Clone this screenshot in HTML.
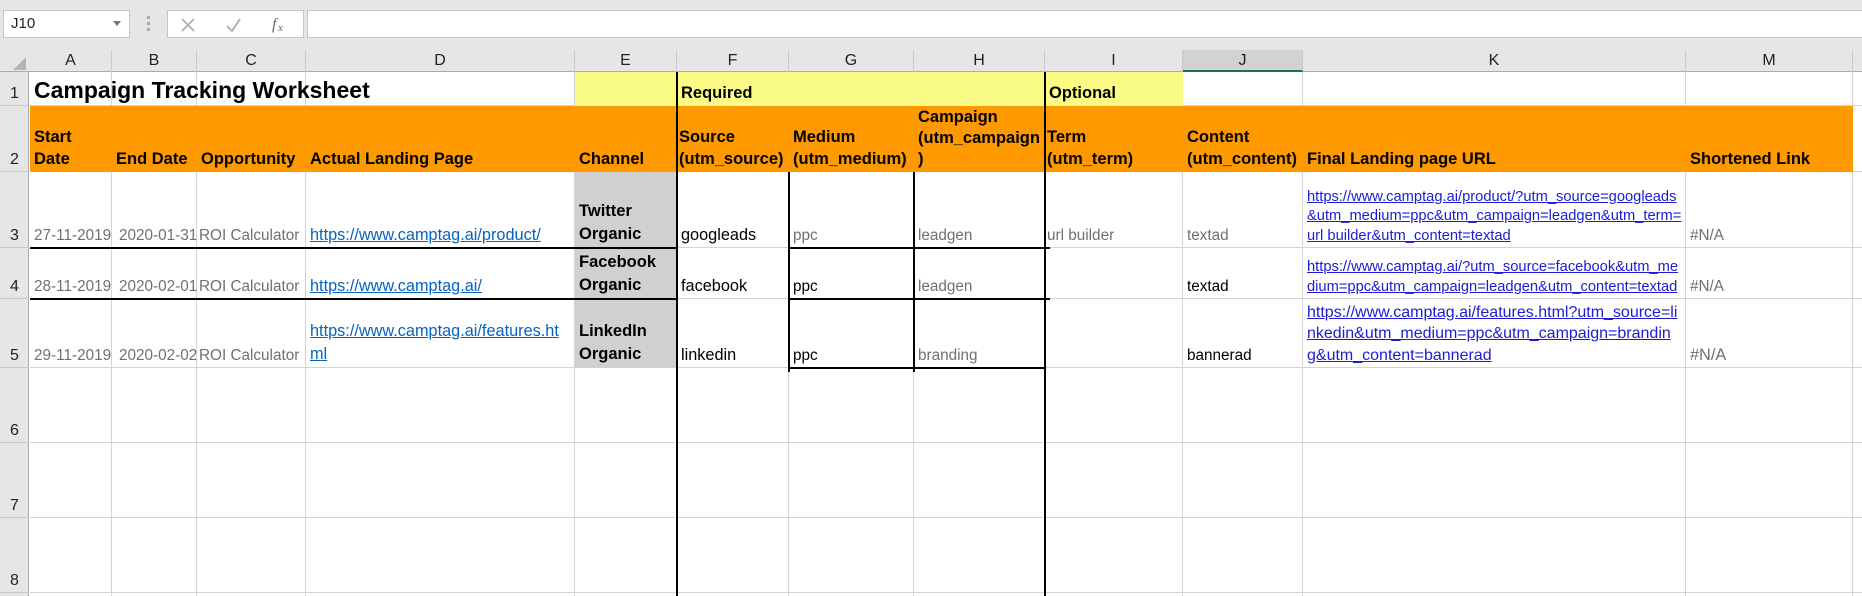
<!DOCTYPE html>
<html><head><meta charset="utf-8">
<style>
*{box-sizing:border-box;margin:0;padding:0}
body{width:1862px;height:596px;overflow:hidden;background:#fff;font-family:"Liberation Sans",Arial,sans-serif;position:relative}
.a{position:absolute}
.c{position:absolute;display:flex;align-items:flex-end;padding:0 0 2px 4px;white-space:nowrap;overflow:visible;font-size:16.3px;line-height:21px}
.b{font-weight:bold;color:#000;font-size:16.5px}
.g{color:#707070;font-size:15.3px}
.k{color:#000}
.lnk{color:#0563c1;text-decoration:underline;font-size:16.3px}
.lnk2{color:#1c1cd6;text-decoration:underline;font-size:14.7px;line-height:19.5px}
.hl{position:absolute;height:1px;background:#d4d4d4}
.vl{position:absolute;width:1px;background:#d4d4d4}
.bh{position:absolute;height:2px;background:#000}
.bv{position:absolute;width:2px;background:#000}
.ch{position:absolute;top:50px;height:22px;text-align:center;font-size:16px;color:#222;line-height:22px;border-right:1px solid #c8c8c8}
.rh{position:absolute;left:0;width:29px;text-align:center;font-size:16px;color:#222;display:flex;align-items:flex-end;justify-content:center;padding-bottom:2px;border-bottom:1px solid #c8c8c8}
</style></head><body>
<div class="a" style="left:0;top:0;width:1862px;height:50px;background:#e6e6e6"></div>
<div class="a" style="left:3px;top:10px;width:127px;height:28px;background:#fff;border:1px solid #c6c6c6;font-size:15px;line-height:26px;padding-left:7px;color:#222">J10</div>
<div class="a" style="left:113px;top:21px;width:0;height:0;border-left:4px solid transparent;border-right:4px solid transparent;border-top:5px solid #777"></div>
<div class="a" style="left:147px;top:16px;width:3px;height:3px;background:#aaa"></div>
<div class="a" style="left:147px;top:22px;width:3px;height:3px;background:#aaa"></div>
<div class="a" style="left:147px;top:28px;width:3px;height:3px;background:#aaa"></div>
<div class="a" style="left:167px;top:10px;width:137px;height:28px;background:#fff;border:1px solid #c6c6c6"></div>
<svg class="a" style="left:180px;top:16px" width="130" height="18">
<path d="M2 3 L14 15 M14 3 L2 15" stroke="#aaa" stroke-width="1.6" fill="none"/>
<path d="M47 10 L52 15 L60 3" stroke="#aaa" stroke-width="1.8" fill="none"/>
<text x="92" y="13" font-family="Liberation Serif,serif" font-style="italic" font-size="16" fill="#666">f</text>
<text x="98" y="15" font-family="Liberation Serif,serif" font-style="italic" font-size="11" fill="#666">x</text>
</svg>
<div class="a" style="left:307px;top:10px;width:1560px;height:28px;background:#fff;border:1px solid #c6c6c6"></div>
<div class="a" style="left:0;top:50px;width:1862px;height:22px;background:#e6e6e6;border-bottom:1px solid #ababab"></div>
<div class="a" style="left:0;top:72px;width:29px;height:524px;background:#e6e6e6;border-right:1px solid #ababab"></div>
<svg class="a" style="left:12px;top:56px" width="16" height="15"><polygon points="14,1 14,14 1,14" fill="#b4b4b4"/></svg>
<div class="ch" style="left:30px;width:82px">A</div>
<div class="ch" style="left:112px;width:85px">B</div>
<div class="ch" style="left:197px;width:109px">C</div>
<div class="ch" style="left:306px;width:269px">D</div>
<div class="ch" style="left:575px;width:102px">E</div>
<div class="ch" style="left:677px;width:112px">F</div>
<div class="ch" style="left:789px;width:125px">G</div>
<div class="ch" style="left:914px;width:131px">H</div>
<div class="ch" style="left:1045px;width:138px">I</div>
<div class="ch" style="left:1183px;width:120px;background:#d2d2d2;border-bottom:2px solid #217346">J</div>
<div class="ch" style="left:1303px;width:383px">K</div>
<div class="ch" style="left:1686px;width:167px">M</div>
<div class="rh" style="top:72px;height:34px">1</div>
<div class="rh" style="top:106px;height:66px">2</div>
<div class="rh" style="top:172px;height:76px">3</div>
<div class="rh" style="top:248px;height:51px">4</div>
<div class="rh" style="top:299px;height:69px">5</div>
<div class="rh" style="top:368px;height:75px">6</div>
<div class="rh" style="top:443px;height:75px">7</div>
<div class="rh" style="top:518px;height:75px">8</div>
<div id="grid"></div>
<div class="a" style="left:575px;top:72px;width:608px;height:34px;background:#fbfc85"></div>
<div class="a" style="left:30px;top:106px;width:1823px;height:66px;background:#ff9900"></div>
<div class="a" style="left:575px;top:172px;width:102px;height:196px;background:#d0d0d0"></div>
<div class="bv" style="left:676px;top:72px;height:524px"></div>
<div class="bv" style="left:1044px;top:72px;height:524px"></div>
<div class="bv" style="left:788px;top:172px;height:200px"></div>
<div class="bv" style="left:913px;top:172px;height:200px"></div>
<div class="bh" style="left:30px;top:247px;width:647px"></div>
<div class="bh" style="left:30px;top:298px;width:647px"></div>
<div class="bh" style="left:788px;top:247px;width:257px"></div>
<div class="bh" style="left:788px;top:298px;width:257px"></div>
<div class="bh" style="left:788px;top:367px;width:257px"></div>
<div class="bh" style="left:1044px;top:247px;width:6px"></div>
<div class="bh" style="left:1044px;top:298px;width:6px"></div>
<div class="c b" style="left:30px;top:72px;height:34px;font-size:23px;line-height:26px;padding-bottom:3px">Campaign Tracking Worksheet</div>
<div class="c b" style="left:677px;top:72px;height:34px">Required</div>
<div class="c b" style="left:1045px;top:72px;height:34px">Optional</div>
<div class="c b" style="left:30px;top:106px;height:66px;line-height:22px">Start<br>Date</div>
<div class="c b" style="left:112px;top:106px;height:66px">End Date</div>
<div class="c b" style="left:197px;top:106px;height:66px">Opportunity</div>
<div class="c b" style="left:306px;top:106px;height:66px">Actual Landing Page</div>
<div class="c b" style="left:575px;top:106px;height:66px">Channel</div>
<div class="c b" style="left:677px;top:106px;height:66px;padding-left:2px;line-height:22px">Source<br>(utm_source)</div>
<div class="c b" style="left:789px;top:106px;height:66px;line-height:22px">Medium<br>(utm_medium)</div>
<div class="c b" style="left:914px;top:106px;height:66px;line-height:21px">Campaign<br>(utm_campaign<br>)</div>
<div class="c b" style="left:1045px;top:106px;height:66px;padding-left:2px;line-height:22px">Term<br>(utm_term)</div>
<div class="c b" style="left:1183px;top:106px;height:66px;line-height:22px">Content<br>(utm_content)</div>
<div class="c b" style="left:1303px;top:106px;height:66px">Final Landing page URL</div>
<div class="c b" style="left:1686px;top:106px;height:66px">Shortened Link</div>
<div class="c g" style="left:30px;top:172px;height:76px">27-11-2019</div>
<div class="c g" style="left:112px;top:172px;height:76px;padding-left:7px">2020-01-31</div>
<div class="c g" style="left:197px;top:172px;height:76px;padding-left:2px">ROI Calculator</div>
<div class="c" style="left:306px;top:172px;height:76px;padding-left:4px"><span class="lnk">https://www.camptag.ai/product/</span></div>
<div class="c b" style="left:575px;top:172px;height:76px;line-height:23px">Twitter<br>Organic</div>
<div class="c k" style="left:677px;top:172px;height:76px">googleads</div>
<div class="c g" style="left:789px;top:172px;height:76px">ppc</div>
<div class="c g" style="left:914px;top:172px;height:76px">leadgen</div>
<div class="c g" style="left:1045px;top:172px;height:76px;padding-left:2px">url builder</div>
<div class="c g" style="left:1183px;top:172px;height:76px">textad</div>
<div class="c" style="left:1303px;top:172px;height:76px"><span class="lnk2">https://www.camptag.ai/product/?utm_source=googleads<br>&amp;utm_medium=ppc&amp;utm_campaign=leadgen&amp;utm_term=<br>url builder&amp;utm_content=textad</span></div>
<div class="c g" style="left:1686px;top:172px;height:76px">#N/A</div>
<div class="c g" style="left:30px;top:248px;height:51px">28-11-2019</div>
<div class="c g" style="left:112px;top:248px;height:51px;padding-left:7px">2020-02-01</div>
<div class="c g" style="left:197px;top:248px;height:51px;padding-left:2px">ROI Calculator</div>
<div class="c" style="left:306px;top:248px;height:51px"><span class="lnk">https://www.camptag.ai/</span></div>
<div class="c b" style="left:575px;top:248px;height:51px;line-height:23px">Facebook<br>Organic</div>
<div class="c k" style="left:677px;top:248px;height:51px">facebook</div>
<div class="c k" style="left:789px;top:248px;height:51px;font-size:15.3px">ppc</div>
<div class="c g" style="left:914px;top:248px;height:51px">leadgen</div>
<div class="c k" style="left:1183px;top:248px;height:51px;font-size:15.3px">textad</div>
<div class="c" style="left:1303px;top:248px;height:51px"><span class="lnk2">https://www.camptag.ai/?utm_source=facebook&amp;utm_me<br>dium=ppc&amp;utm_campaign=leadgen&amp;utm_content=textad</span></div>
<div class="c g" style="left:1686px;top:248px;height:51px">#N/A</div>
<div class="c g" style="left:30px;top:299px;height:69px">29-11-2019</div>
<div class="c g" style="left:112px;top:299px;height:69px;padding-left:7px">2020-02-02</div>
<div class="c g" style="left:197px;top:299px;height:69px;padding-left:2px">ROI Calculator</div>
<div class="c" style="left:306px;top:299px;height:69px;line-height:23px"><span class="lnk">https://www.camptag.ai/features.ht<br>ml</span></div>
<div class="c b" style="left:575px;top:299px;height:69px;line-height:23px">LinkedIn<br>Organic</div>
<div class="c k" style="left:677px;top:299px;height:69px">linkedin</div>
<div class="c k" style="left:789px;top:299px;height:69px;font-size:15.3px">ppc</div>
<div class="c g" style="left:914px;top:299px;height:69px">branding</div>
<div class="c k" style="left:1183px;top:299px;height:69px;font-size:15.3px">bannerad</div>
<div class="c" style="left:1303px;top:299px;height:69px"><span class="lnk2" style="font-size:16px;line-height:21.5px">https://www.camptag.ai/features.html?utm_source=li<br>nkedin&amp;utm_medium=ppc&amp;utm_campaign=brandin<br>g&amp;utm_content=bannerad</span></div>
<div class="c g" style="left:1686px;top:299px;height:69px;font-size:16.3px">#N/A</div>
<script>
var g=document.getElementById('grid'),h='';
var cols=[112,197,306,575,677,789,914,1045,1183,1303,1686,1853];
var rows=[106,172,248,299,368,443,518,593];
cols.forEach(function(x){h+='<div class="vl" style="left:'+(x-1)+'px;top:72px;height:524px"></div>';});
rows.forEach(function(y){h+='<div class="hl" style="left:30px;top:'+(y-1)+'px;width:1832px"></div>';});
g.innerHTML=h;
</script>
</body></html>
